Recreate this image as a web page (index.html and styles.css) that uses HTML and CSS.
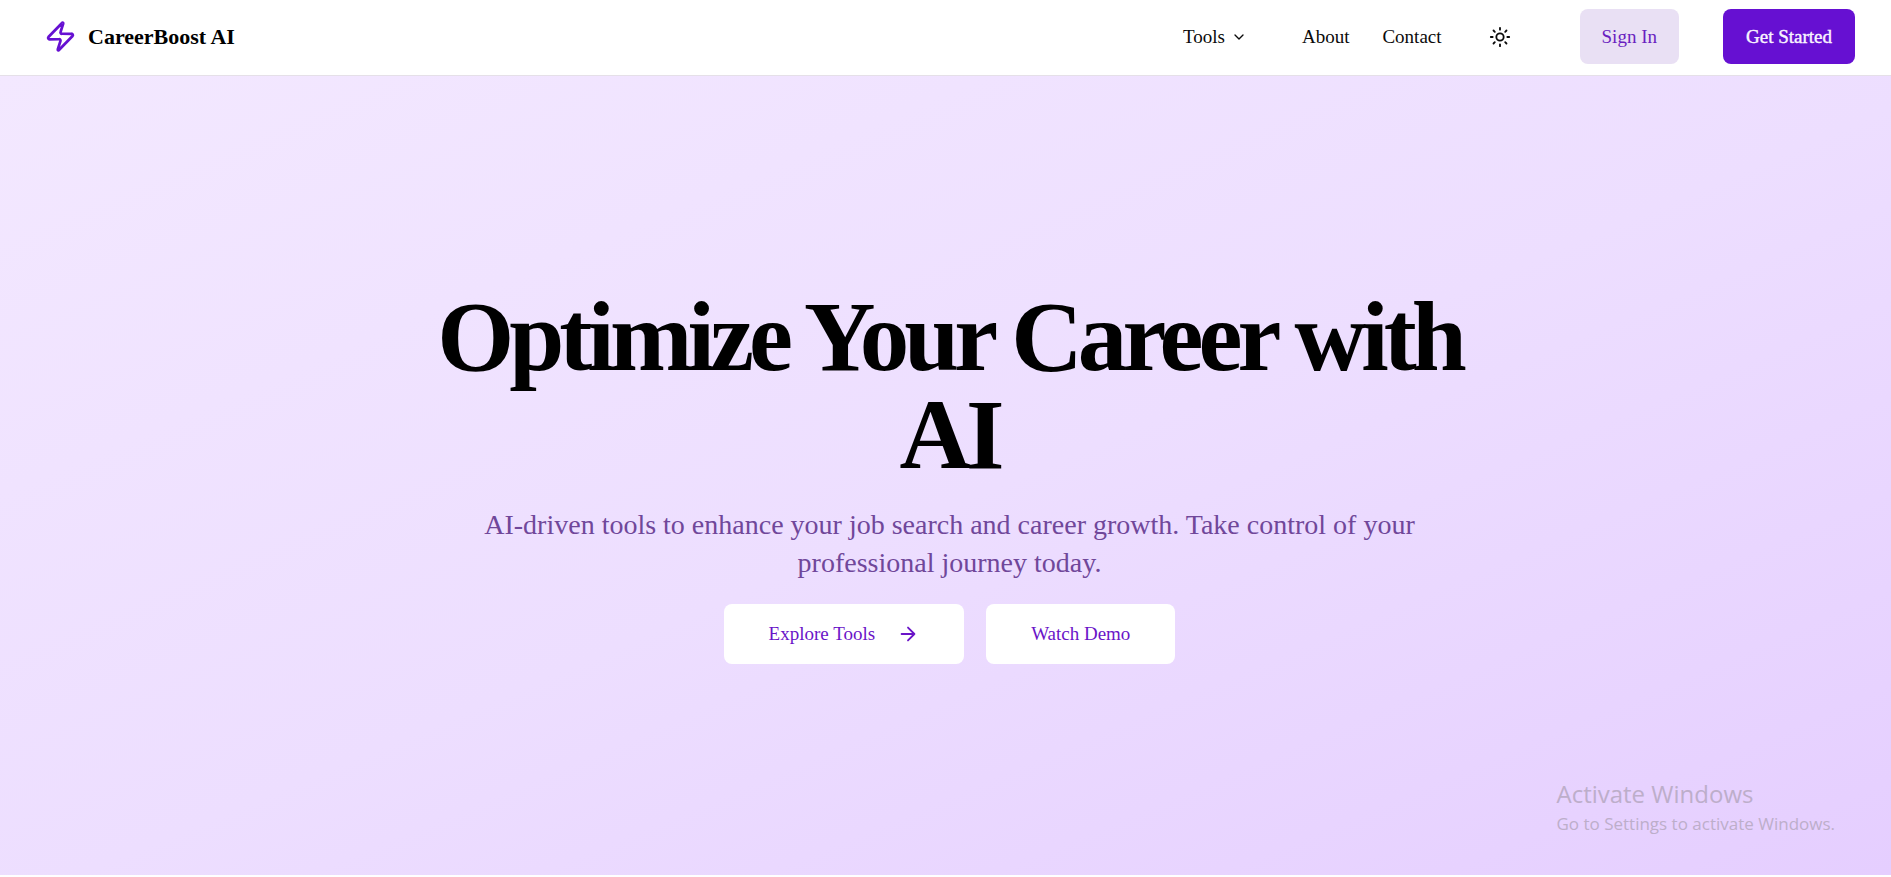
FILE: index.html
```html
<!DOCTYPE html>
<html lang="en">
<head>
<meta charset="utf-8">
<meta name="viewport" content="width=device-width, initial-scale=1">
<title>CareerBoost AI</title>
<link rel="stylesheet" href="styles.css">
</head>
<body>
<header class="site-header">
  <a class="brand" href="#">
    <svg class="icon brand-icon" viewBox="0 0 24 24" aria-hidden="true"><path d="M4 14a1 1 0 0 1-.78-1.63l9.9-10.2a.5.5 0 0 1 .86.46l-1.92 6.02A1 1 0 0 0 13 10h7a1 1 0 0 1 .78 1.63l-9.9 10.2a.5.5 0 0 1-.86-.46l1.92-6.02A1 1 0 0 0 11 14z"/></svg>
    <span>CareerBoost AI</span>
  </a>
  <nav class="nav">
    <button class="nav-menu" type="button" aria-haspopup="true">Tools
      <svg class="icon chevron" viewBox="0 0 24 24" aria-hidden="true"><path d="m6 9 6 6 6-6"/></svg>
    </button>
    <a class="nav-link" href="#">About</a>
    <a class="nav-link" href="#">Contact</a>
  </nav>
  <button class="theme-toggle" type="button" aria-label="Toggle theme">
    <svg class="icon icon-md" viewBox="0 0 24 24" aria-hidden="true"><circle cx="12" cy="12" r="4"/><path d="M12 2v2M12 20v2M4.93 4.93l1.41 1.41M17.66 17.66l1.41 1.41M2 12h2M20 12h2M6.34 17.66l-1.41 1.41M19.07 4.93l-1.41 1.41"/></svg>
  </button>
  <div class="account">
    <button class="btn btn-soft" type="button">Sign In</button>
    <button class="btn btn-primary" type="button">Get Started</button>
  </div>
</header>
<main class="hero">
  <h1 class="hero-title">Optimize Your Career with AI</h1>
  <p class="hero-text">AI-driven tools to enhance your job search and career growth. Take control of your professional journey today.</p>
  <div class="hero-actions">
    <button class="btn btn-light" type="button">Explore Tools
      <svg class="icon icon-md" viewBox="0 0 24 24" aria-hidden="true"><path d="M5 12h14M12 5l7 7-7 7"/></svg>
    </button>
    <button class="btn btn-light" type="button">Watch Demo</button>
  </div>
</main>
<aside class="activation">
  <p class="activation-title">Activate Windows</p>
  <p class="activation-text">Go to Settings to activate Windows.</p>
</aside>
</body>
</html>
```
FILE: styles.css
```css
* { box-sizing: border-box; }

body {
  margin: 0;
  min-height: 100vh;
  display: flex;
  flex-direction: column;
  background: #fff;
  color: #0a0a0a;
  font-family: "Liberation Serif", "Times New Roman", serif;
  font-size: 19px;
  line-height: 28px;
}

h1, p { margin: 0; }
a { color: inherit; text-decoration: none; }
button { font: inherit; color: inherit; border: 0; background: none; cursor: pointer; }

.icon {
  flex: none;
  fill: none;
  stroke: currentColor;
  stroke-width: 2;
  stroke-linecap: round;
  stroke-linejoin: round;
}
.icon-md { width: 22px; height: 22px; }

.site-header {
  display: flex;
  align-items: center;
  padding: 9px 36px 11px 44px;
  border-bottom: 1px solid #e5e0e8;
}

.brand {
  display: flex;
  align-items: center;
  gap: 11px;
  margin-right: auto;
  color: #000;
  font-size: 22px;
  font-weight: bold;
}
.brand-icon { width: 33px; height: 33px; color: #6610d2; }

.nav { display: flex; align-items: center; gap: 33px; }
.nav-menu {
  display: flex;
  align-items: center;
  gap: 6px;
  padding: 0 22px;
}
.chevron { width: 16px; height: 16px; }

.theme-toggle {
  display: flex;
  align-items: center;
  justify-content: center;
  width: 55px;
  height: 55px;
  margin: 0 52px 0 31px;
  padding: 0;
}

.account { display: flex; gap: 44px; }

.btn {
  display: flex;
  align-items: center;
  gap: 22px;
  height: 55px;
  padding: 0 22px;
  border-radius: 8px;
}
.btn-soft { background: #e9e0f4; color: #6a1fc0; }
.btn-primary { padding: 0 23px; background: #6610d2; color: #faf5ff; -webkit-text-stroke: 0.4px; }
.btn-light { height: 60px; padding: 0 45px; background: #fff; color: #6a14c8; }

.hero {
  flex: 1;
  display: flex;
  flex-direction: column;
  align-items: center;
  justify-content: center;
  gap: 22px;
  margin-bottom: 2px;
  padding: 0 0 0 8px;
  background: linear-gradient(to bottom right, #f3e8ff, #eddeff 52%, #e5ceff);
  text-align: center;
}
.hero-title {
  max-width: 1100px;
  color: #000;
  font-size: 99px;
  line-height: 98px;
  letter-spacing: -0.05em;
}
.hero-text {
  max-width: 985px;
  color: #70479a;
  font-size: 28px;
  line-height: 38px;
}
.hero-actions { display: flex; gap: 22px; }

.activation {
  position: absolute;
  right: 56px;
  bottom: 40px;
  color: #bdaeca;
  font-family: "Open Sans", "Noto Sans", sans-serif;
}
.activation-title { font-size: 24px; line-height: 34px; }
.activation-text { font-size: 17px; line-height: 26px; }
```
